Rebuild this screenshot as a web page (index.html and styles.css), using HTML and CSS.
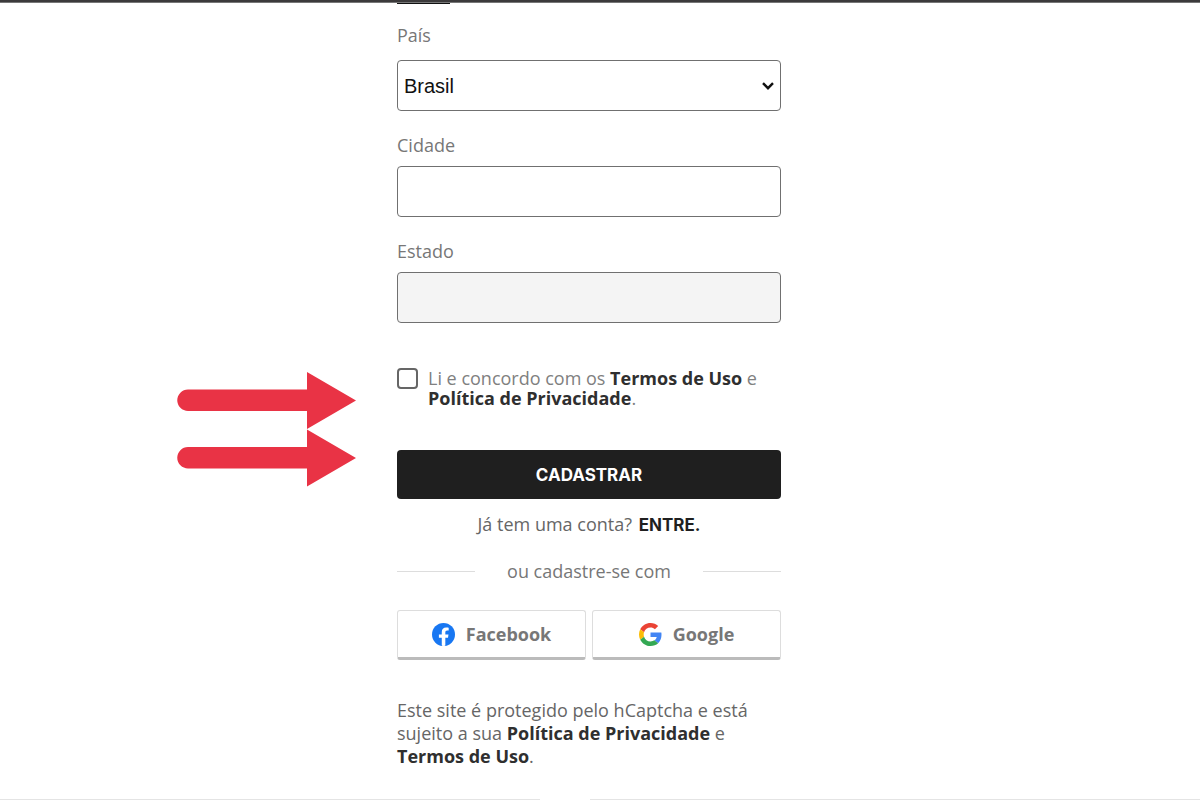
FILE: index.html
```html
<!DOCTYPE html>
<html lang="pt-BR">
<head>
<meta charset="utf-8">
<meta name="viewport" content="width=device-width, initial-scale=1">
<title>Cadastro</title>
<link rel="stylesheet" href="styles.css">
</head>
<body>
<div class="page">
  <header class="topbar"></header>
  <main class="content">
    <div class="tab-marker"></div>
    <form class="signup">
      <div class="field field-select">
        <label for="pais">País</label>
        <div class="select-wrap">
          <select id="pais" class="control"><option>Brasil</option></select>
          <svg class="chevron" viewBox="0 0 14 10" aria-hidden="true"><path d="M2 2.2 7 7.2 12 2.2" fill="none" stroke="#111" stroke-width="2.4"/></svg>
        </div>
      </div>
      <div class="field">
        <label for="cidade">Cidade</label>
        <input id="cidade" class="control" type="text">
      </div>
      <div class="field">
        <label for="estado">Estado</label>
        <input id="estado" class="control" type="text" disabled>
      </div>
      <div class="consent">
        <input id="termos" class="check" type="checkbox">
        <label for="termos">Li e concordo com os <a href="#">Termos de Uso</a> e <a href="#">Política de Privacidade</a>.</label>
        <svg class="arrows" viewBox="0 0 180 116" aria-hidden="true">
          <g fill="#e93345">
            <path d="M11 18.500H130V1L179 29.500 130 58V40H11A10.750 10.750 0 0 1 11 18.500Z"/>
            <path d="M11 76H130V58.500L179 87 130 115.500V97.500H11A10.750 10.750 0 0 1 11 76Z"/>
          </g>
        </svg>
      </div>
      <button class="submit" type="submit">CADASTRAR</button>
      <p class="login">Já tem uma conta? <a href="#">ENTRE.</a></p>
      <div class="divider"><span>ou cadastre-se com</span></div>
      <div class="social">
        <button class="social-btn" type="button">
          <svg class="logo" viewBox="0 0 24 24" aria-hidden="true"><circle cx="12" cy="12" r="12" fill="#1877f2"/><path d="M16.700 15.500 17.200 12H13.900V9.800c0-1 .5-1.900 2-1.900h1.500V5s-1.400-.2-2.700-.2c-2.700 0-4.500 1.600-4.500 4.600V12h-3v3.500h3v8.350a12 12 0 0 0 3.700 0V15.500Z" fill="#fff"/></svg>
          Facebook
        </button>
        <button class="social-btn" type="button">
          <svg class="logo" viewBox="0 0 48 48" aria-hidden="true"><path fill="#ea4335" d="M24 9.500c3.540 0 6.710 1.220 9.210 3.600l6.850-6.850C35.900 2.380 30.470 0 24 0 14.620 0 6.510 5.380 2.560 13.220l7.980 6.190C12.430 13.720 17.740 9.500 24 9.500z"/><path fill="#4285f4" d="M46.980 24.550c0-1.570-.15-3.090-.38-4.550H24v9.020h12.940c-.58 2.960-2.260 5.480-4.780 7.180l7.730 6c4.510-4.180 7.090-10.360 7.090-17.650z"/><path fill="#fbbc05" d="M10.530 28.590c-.48-1.450-.76-2.990-.76-4.590s.27-3.140.76-4.590l-7.980-6.190C.92 16.460 0 20.120 0 24c0 3.880.92 7.540 2.560 10.780l7.970-6.190z"/><path fill="#34a853" d="M24 48c6.480 0 11.930-2.130 15.890-5.810l-7.730-6c-2.150 1.450-4.920 2.300-8.160 2.300-6.260 0-11.570-4.220-13.470-9.910l-7.980 6.190C6.510 42.620 14.620 48 24 48z"/></svg>
          Google
        </button>
      </div>
      <p class="legal">Este site é protegido pelo hCaptcha e está sujeito a sua <a href="#">Política de Privacidade</a> e <a href="#">Termos de Uso</a>.</p>
    </form>
  </main>
  <footer class="page-end"><span></span><span></span></footer>
</div>
</body>
</html>
```
FILE: styles.css
```css
* { box-sizing: border-box; }
body {
  margin: 0;
  background: #fff;
  color: #666;
  font: 18px/24px "Open Sans", sans-serif;
}
p { margin: 0; }
.page { min-height: 100vh; display: flex; flex-direction: column; }
.topbar { height: 3px; background: #3c3a3b; border-bottom: 1px solid #777; }
.content { flex: 1; padding: 0 22px 0 0; }
.tab-marker, .signup { max-width: 384px; margin: 0 auto; }
.tab-marker::before { content: ""; display: block; width: 53px; height: 1px; background: #111; }
.signup { display: flex; flex-direction: column; padding-top: 19px; }
.field { display: flex; flex-direction: column; gap: 9px; margin-bottom: 22px; }
.field-select { gap: 13px; }
.field label { color: #777; }
.control {
  width: 100%;
  height: 51px;
  border: 1px solid #707070;
  border-radius: 4px;
  background: #fff;
  padding: 0 6px;
  color: #111;
  font: 20px "Liberation Sans", sans-serif;
  appearance: none;
}
.control:disabled { background: #f4f4f4; }
.select-wrap { display: grid; align-items: center; }
.select-wrap > * { grid-area: 1 / 1; }
.chevron { justify-self: end; width: 14px; height: 10px; margin-right: 6px; pointer-events: none; }
.consent { position: relative; display: flex; gap: 10px; margin: 23px 0 42px; line-height: 20px; }
.consent label { color: #808080; }
.check {
  flex: none;
  width: 21px;
  height: 21px;
  margin: 0;
  border: 2px solid #666;
  border-radius: 4px;
  background: #fff;
  appearance: none;
}
.check:checked { background: #1f1f1f; }
.arrows { position: absolute; top: 3px; right: 100%; width: 180px; height: 116px; margin-right: 40px; }
a { color: #2f2f2f; font-weight: 700; text-decoration: none; }
.submit {
  height: 49px;
  border: 0;
  border-radius: 4px;
  background: #1f1f1f;
  color: #fff;
  font: 700 17px Inter, sans-serif;
}
.login { margin-top: 13px; text-align: center; }
.login a { margin-left: 2px; color: #1f1f1f; font: 700 17px Inter, sans-serif; }
.divider { display: flex; align-items: center; gap: 32px; margin-top: 23px; color: #777; }
.divider::before, .divider::after { content: ""; flex: 1; height: 1px; background: #ddd; }
.social { display: grid; grid-template-columns: 1fr 1fr; gap: 6px; margin-top: 27px; }
.social-btn {
  display: flex;
  align-items: center;
  justify-content: center;
  gap: 11px;
  height: 50px;
  border: 1px solid #ddd;
  border-bottom: 3px solid #bbb;
  border-radius: 3px;
  background: #fff;
  color: #777;
  font: 700 18px "Open Sans", sans-serif;
}
.logo { width: 23px; height: 23px; }
.legal { margin-top: 39px; line-height: 23px; }
.page-end { display: grid; grid-template-columns: 540fr 610fr; gap: 50px; }
.page-end span { height: 1px; background: #e4e4e4; }
```
